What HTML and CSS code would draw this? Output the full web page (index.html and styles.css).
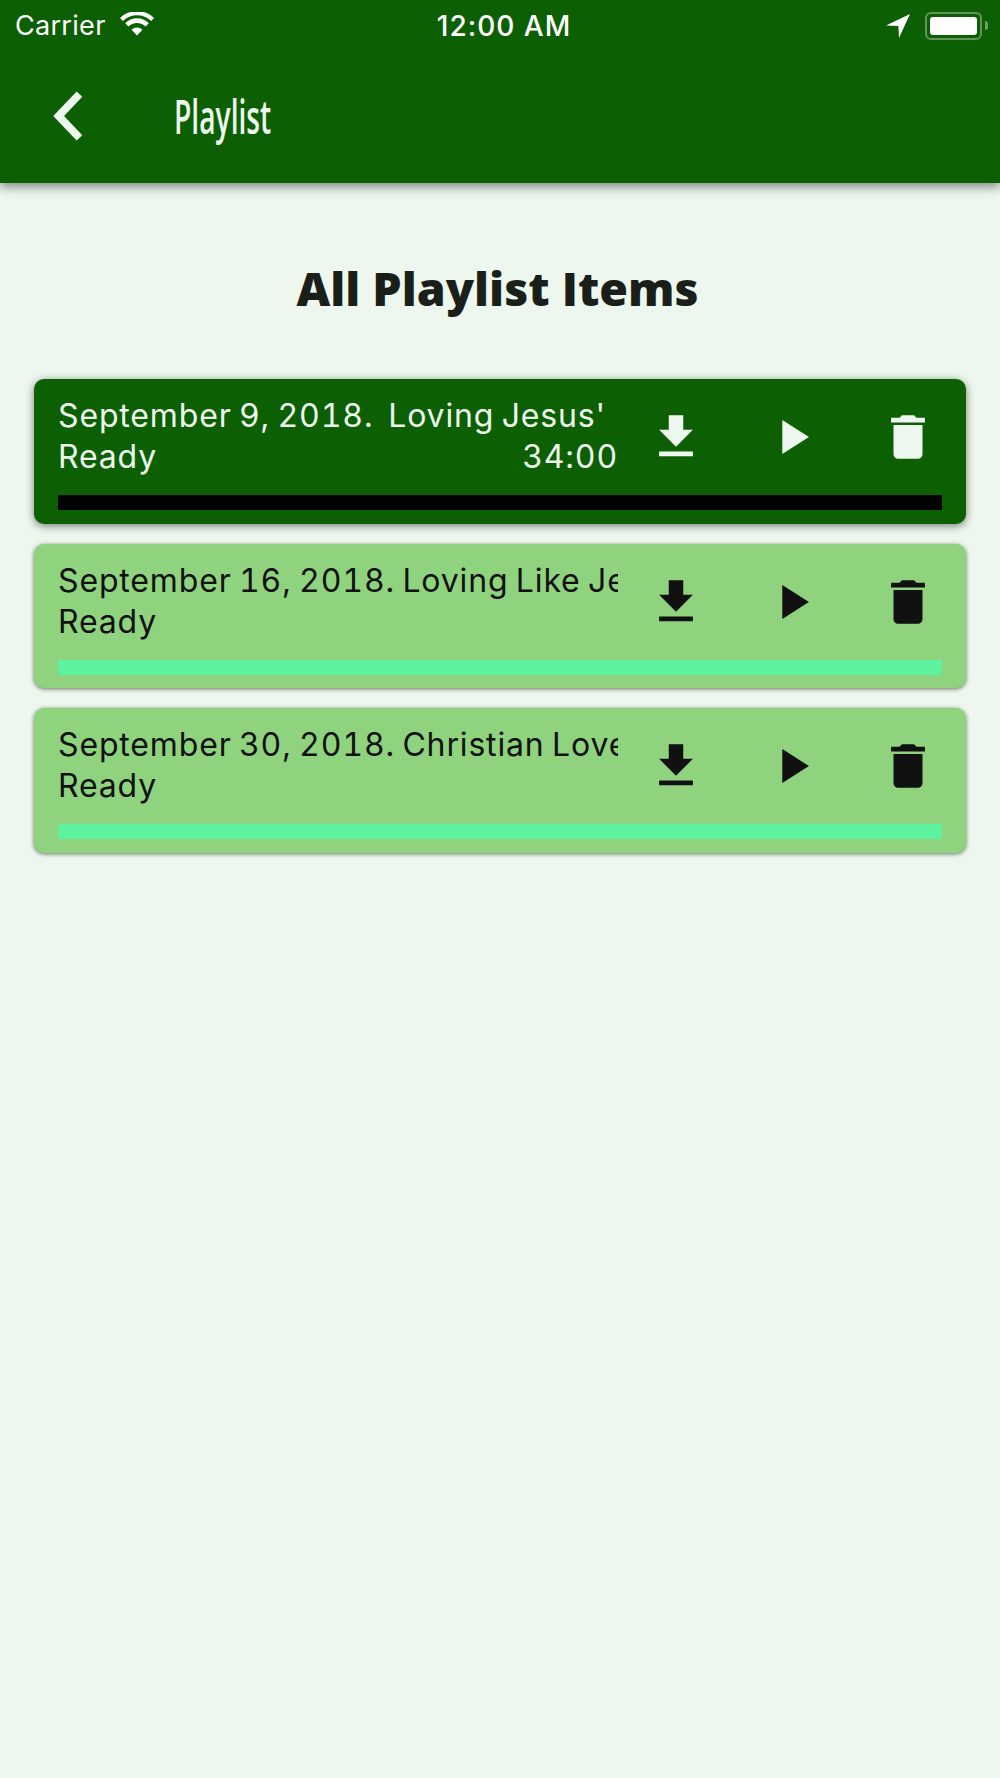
FILE: index.html
```html
<!DOCTYPE html>
<html lang="en">
<head>
<meta charset="utf-8">
<title>Playlist</title>
<link rel="stylesheet" href="styles.css">
</head>
<body>
<header class="app-header">
  <div class="status-bar">
    <div class="status-left">
      <span class="carrier">Carrier</span>
      <svg class="wifi" viewBox="0 0 34 24"><path d="M17 23.5 11.6 17.8a7.6 7.6 0 0 1 10.8 0z"/><path d="M8.4 14.5 5.2 11.2a16.800 16.800 0 0 1 23.600 0l-3.200 3.300a12.200 12.200 0 0 0-17.200 0z"/><path d="M2.900 8.900 0 5.900a24.500 24.500 0 0 1 34 0l-2.900 3a20.300 20.300 0 0 0-28.200 0z"/></svg>
    </div>
    <span class="clock">12:00 AM</span>
    <div class="status-right">
      <svg class="location" viewBox="0 0 24 24"><path d="M24 0 0 11.500l12.400.6L13 24z"/></svg>
      <div class="battery"><div class="battery-fill"></div></div>
      <div class="battery-cap"></div>
    </div>
  </div>
  <div class="toolbar">
    <svg class="back" viewBox="0 0 30 48"><path d="M26 3 6 24l20 21" fill="none" stroke="currentColor" stroke-width="7.5"/></svg>
    <span class="toolbar-title"><span class="condensed">Playlist</span></span>
  </div>
</header>

<main class="content">
  <h1 class="heading">All Playlist Items</h1>
  <ul class="list">
    <li class="card card-active">
      <div class="card-row">
        <div class="card-text">
          <div class="line">September 9, 2018.&nbsp; Loving Jesus'</div>
          <div class="line line-split"><span>Ready</span><span>34:00</span></div>
        </div>
        <button class="icon-btn"><svg viewBox="0 0 24 24"><path d="M19 9h-4V3H9v6H5l7 7 7-7zM5 18v2h14v-2H5z"/></svg></button>
        <button class="icon-btn"><svg viewBox="0 0 24 24"><path d="M8 5v14l11-7z"/></svg></button>
        <button class="icon-btn"><svg viewBox="0 0 24 24"><path d="M6 19c0 1.100.9 2 2 2h8c1.100 0 2-.9 2-2V7H6v12zM19 4h-3.500l-1-1h-5l-1 1H5v2h14V4z"/></svg></button>
      </div>
      <div class="progress"></div>
    </li>
    <li class="card">
      <div class="card-row">
        <div class="card-text">
          <div class="line">September 16, 2018. Loving Like Jesus</div>
          <div class="line line-split"><span>Ready</span></div>
        </div>
        <button class="icon-btn"><svg viewBox="0 0 24 24"><path d="M19 9h-4V3H9v6H5l7 7 7-7zM5 18v2h14v-2H5z"/></svg></button>
        <button class="icon-btn"><svg viewBox="0 0 24 24"><path d="M8 5v14l11-7z"/></svg></button>
        <button class="icon-btn"><svg viewBox="0 0 24 24"><path d="M6 19c0 1.100.9 2 2 2h8c1.100 0 2-.9 2-2V7H6v12zM19 4h-3.500l-1-1h-5l-1 1H5v2h14V4z"/></svg></button>
      </div>
      <div class="progress"></div>
    </li>
    <li class="card">
      <div class="card-row">
        <div class="card-text">
          <div class="line">September 30, 2018. Christian Love</div>
          <div class="line line-split"><span>Ready</span></div>
        </div>
        <button class="icon-btn"><svg viewBox="0 0 24 24"><path d="M19 9h-4V3H9v6H5l7 7 7-7zM5 18v2h14v-2H5z"/></svg></button>
        <button class="icon-btn"><svg viewBox="0 0 24 24"><path d="M8 5v14l11-7z"/></svg></button>
        <button class="icon-btn"><svg viewBox="0 0 24 24"><path d="M6 19c0 1.100.9 2 2 2h8c1.100 0 2-.9 2-2V7H6v12zM19 4h-3.500l-1-1h-5l-1 1H5v2h14V4z"/></svg></button>
      </div>
      <div class="progress"></div>
    </li>
  </ul>
</main>
</body>
</html>
```
FILE: styles.css
```css
* { box-sizing: border-box; }
html, body { margin: 0; padding: 0; }
body {
  width: 1000px;
  height: 1778px;
  overflow: hidden;
  background: #edf7ed;
  font-family: Inter, "Liberation Sans", sans-serif;
  color: #111;
}
.app-header {
  height: 183px;
  background: #0c5f02;
  color: #edf7ed;
  box-shadow: 0 4px 10px rgba(0, 0, 0, 0.45);
  position: relative;
}
.status-bar {
  height: 50px;
  padding: 1px 12px 0 15px;
  display: flex;
  align-items: center;
  justify-content: space-between;
  position: relative;
  color: #fff;
}
.status-left { display: flex; align-items: center; gap: 14px; }
.carrier { font-size: 27px; letter-spacing: 0.3px; font-weight: 400; line-height: 50px; }
.wifi { width: 34px; height: 24px; fill: #fff; margin-bottom: 4px; }
.clock {
  position: absolute;
  left: 0;
  right: 0;
  top: 0;
  text-align: center;
  font-size: 28px;
  letter-spacing: 1px;
  font-weight: 500;
  line-height: 52px;
  padding-left: 8px;
}
.status-right { display: flex; align-items: center; }
.location { width: 24px; height: 24px; fill: #fff; margin-right: 15px; }
.battery {
  width: 57px;
  height: 28px;
  border: 2px solid rgba(255, 255, 255, 0.35);
  border-radius: 6px;
  padding: 3px;
}
.battery-fill { height: 100%; background: #fff; border-radius: 3px; }
.battery-cap {
  width: 3px;
  height: 9px;
  margin-left: 3px;
  background: rgba(255, 255, 255, 0.4);
  border-radius: 0 3px 3px 0;
}
.toolbar {
  height: 133px;
  display: flex;
  align-items: center;
  padding: 0 0 2px 52px;
}
.back { width: 32px; height: 50px; color: #edf7ed; }
.toolbar-title { margin-left: 90px; font-size: 47px; font-weight: 600; font-family: "Open Sans", sans-serif; }
.condensed { display: inline-block; transform: scaleX(0.6); transform-origin: left center; }
.content { padding: 0 34px; }
.heading {
  margin: 72px 0 58px;
  padding-right: 5px;
  font-family: "Open Sans", sans-serif;
  font-weight: 800;
  font-size: 46.500px;
  line-height: 66px;
  text-align: center;
  color: #1a1f1a;
}
.list { list-style: none; margin: 0; padding: 0; display: flex; flex-direction: column; gap: 20px; }
.card {
  height: 144.500px;
  border-radius: 10px;
  background: #8fd37f;
  color: #111;
  box-shadow: 0 1px 4px rgba(0, 0, 0, 0.55);
}
.card-active {
  background: #0c5f02;
  color: #edf7ed;
  box-shadow: 0 2px 8px rgba(0, 0, 0, 0.5);
}
.card-row { display: flex; height: 116px; padding-left: 24px; }
.card-text { width: 560px; overflow: hidden; padding-top: 16px; }
.line {
  font-size: 32px;
  letter-spacing: 0.85px;
  word-spacing: -2px;
  font-variant-numeric: tabular-nums;
  line-height: 41px;
  white-space: nowrap;
  overflow: hidden;
}
.line-split { display: flex; justify-content: space-between; }
.icon-btn {
  width: 116px;
  height: 116px;
  flex: none;
  padding: 0;
  border: 0;
  background: transparent;
  color: inherit;
  display: flex;
  align-items: center;
  justify-content: center;
}
.icon-btn svg { width: 58px; height: 58px; fill: currentColor; }
.progress { height: 15px; margin: 0 24px; background: #5cf29e; }
.card-active .progress { background: #000; }
```
